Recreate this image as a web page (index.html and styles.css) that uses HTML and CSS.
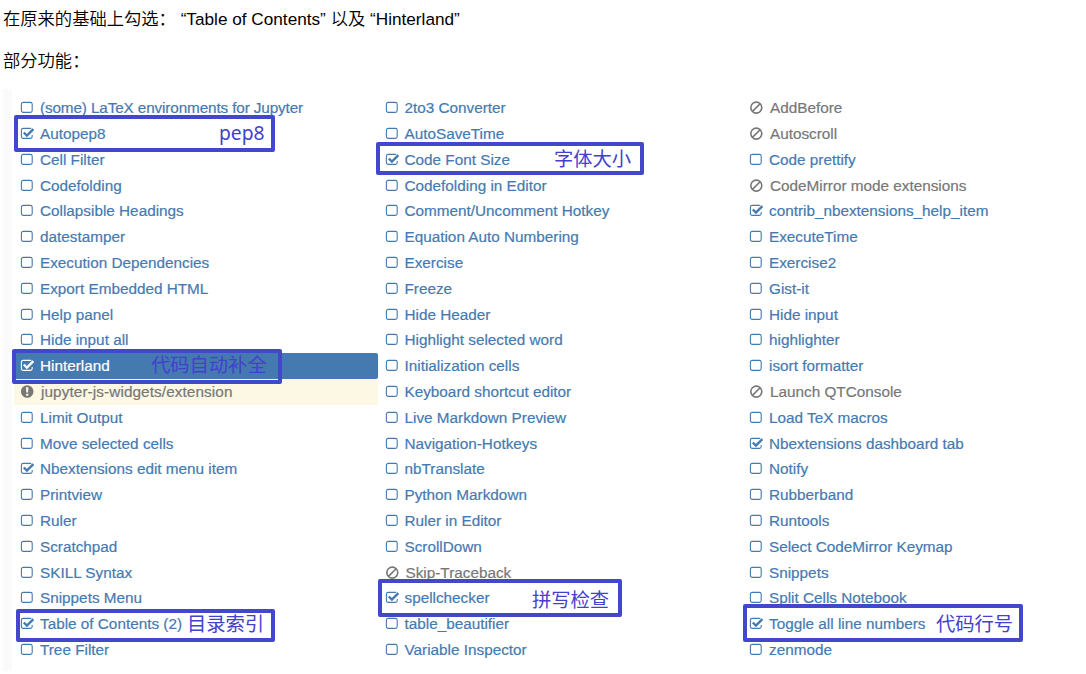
FILE: index.html
```html
<!DOCTYPE html>
<html lang="zh-CN">
<head>
<meta charset="utf-8">
<title>Nbextensions</title>
<link rel="stylesheet" href="styles.css">
</head>
<body>
<svg class="sprite" aria-hidden="true">
  <symbol id="off" viewBox="0 0 14 14"><rect x="1.4" y="1.4" width="10.8" height="10" rx="1.8" fill="none" stroke="currentColor" stroke-width="1.1"/></symbol>
  <symbol id="on" viewBox="0 0 14 14"><path d="M12.2 8v1.6a1.8 1.8 0 0 1-1.8 1.8H3.2a1.8 1.8 0 0 1-1.8-1.8V3.2a1.8 1.8 0 0 1 1.8-1.8h7.2q.5 0 .9.2" fill="none" stroke="currentColor" stroke-width="1.1"/><path d="M3.8 5.5l3.1 3.1 6.5-6.5" fill="none" stroke="currentColor" stroke-width="2.4"/></symbol>
  <symbol id="ban" viewBox="0 0 14 14"><circle cx="7.3" cy="6.6" r="5.5" fill="none" stroke="currentColor" stroke-width="1.6"/><path d="M3.5 10.4l7.6-7.6" stroke="currentColor" stroke-width="1.6"/></symbol>
  <symbol id="warn" viewBox="0 0 14 14"><circle cx="7.2" cy="6.5" r="6.3" fill="currentColor"/><path d="M6 2.3h2.4l-.3 5.3H6.3zM6.1 8.8h2.2v2H6.1z" fill="#fcf8e3"/></symbol>
</svg>
<p class="intro">在原来的基础上勾选： <span class="latin">“Table of Contents”</span> 以及 <span class="latin">“Hinterland”</span></p>
<p class="intro second">部分功能：</p>
<main class="panel">
  <div class="columns" id="columns"></div>
  <div class="mark mark-pep"><span>pep8</span></div>
  <div class="mark mark-hint"><span>代码自动补全</span></div>
  <div class="mark mark-toc"><span>目录索引</span></div>
  <div class="mark mark-font"><span>字体大小</span></div>
  <div class="mark mark-spell"><span>拼写检查</span></div>
  <div class="mark mark-lines"><span>代码行号</span></div>
</main>
<script src="app.js"></script>
</body>
</html>
```
FILE: styles.css
```css
* { box-sizing: border-box; }
body {
  margin: 0;
  width: 1086px;
  height: 674px;
  overflow: hidden;
  background: #fff;
  color: #000;
  font-family: "Liberation Sans", "Noto Sans CJK SC", sans-serif;
}
.sprite { display: none; }
.intro {
  margin: 0;
  padding: 7px 0 0 3px;
  height: 42px;
  font-size: 17.3px;
  line-height: 24px;
  font-weight: 350;
  white-space: nowrap;
}
.latin { font-size: 17.2px; }
.second { height: 47px; }
.panel {
  position: relative;
  height: 582px;
  margin-left: 3px;
  border-left: 9px solid #fafafa;
}
.columns {
  display: grid;
  grid-template-columns: 364.5px 364.5px 1fr;
  padding: 6.4px 0 0 2px;
}
.list { margin: 0; padding: 0; list-style: none; }
.item {
  display: flex;
  align-items: center;
  gap: 6px;
  height: 25.81px;
  margin-right: 1px;
  padding-left: 6px;
  color: #457ab1;
  font-size: 15.3px;
  white-space: nowrap;
  -webkit-text-stroke: 0.2px currentColor;
}
.item svg { width: 14px; height: 14px; flex: none; }
.item.ban, .item.warn { color: #777; }
.item.ban { gap: 7px; }
.item.warn { gap: 7px; background: #fcf8e3; letter-spacing: 0.1px; }
.item.selected { background: #457ab1; color: #fff; border-radius: 2px; }
.list:first-child .item:first-child { letter-spacing: -0.13px; }
.mark {
  position: absolute;
  border: 4px solid #4247cc;
  border-radius: 2px;
  color: #4340cf;
  font-size: 19.3px;
  line-height: 28px;
  white-space: nowrap;
}
.mark span { position: absolute; }
.mark-pep { left: 2px; top: 26px; width: 261px; height: 37px; }
.mark-pep span { left: 201px; top: 0; font-family: "Noto Sans", sans-serif; }
.mark-hint { left: 0; top: 260px; width: 270px; height: 35px; }
.mark-hint span { left: 135px; top: -1px; }
.mark-toc { left: 4px; top: 520px; width: 259px; height: 33px; }
.mark-toc span { left: 167px; top: -2px; }
.mark-font { left: 364px; top: 53px; width: 268px; height: 33px; }
.mark-font span { left: 174px; top: 0; }
.mark-spell { left: 366px; top: 490px; width: 244px; height: 38px; }
.mark-spell span { left: 150px; top: 4px; }
.mark-lines { left: 731px; top: 515px; width: 280px; height: 38px; }
.mark-lines span { left: 189px; top: 3px; }
```
FILE: app.js
```js
// Prefixes: "+" enabled, "-" incompatible, "!" deprecated, "*" currently selected.
const columns = [
  ["(some) LaTeX environments for Jupyter", "+Autopep8", "Cell Filter", "Codefolding", "Collapsible Headings", "datestamper", "Execution Dependencies", "Export Embedded HTML", "Help panel", "Hide input all", "*Hinterland", "!jupyter-js-widgets/extension", "Limit Output", "Move selected cells", "+Nbextensions edit menu item", "Printview", "Ruler", "Scratchpad", "SKILL Syntax", "Snippets Menu", "+Table of Contents (2)", "Tree Filter"],
  ["2to3 Converter", "AutoSaveTime", "+Code Font Size", "Codefolding in Editor", "Comment/Uncomment Hotkey", "Equation Auto Numbering", "Exercise", "Freeze", "Hide Header", "Highlight selected word", "Initialization cells", "Keyboard shortcut editor", "Live Markdown Preview", "Navigation-Hotkeys", "nbTranslate", "Python Markdown", "Ruler in Editor", "ScrollDown", "-Skip-Traceback", "+spellchecker", "table_beautifier", "Variable Inspector"],
  ["-AddBefore", "-Autoscroll", "Code prettify", "-CodeMirror mode extensions", "+contrib_nbextensions_help_item", "ExecuteTime", "Exercise2", "Gist-it", "Hide input", "highlighter", "isort formatter", "-Launch QTConsole", "Load TeX macros", "+Nbextensions dashboard tab", "Notify", "Rubberband", "Runtools", "Select CodeMirror Keymap", "Snippets", "Split Cells Notebook", "+Toggle all line numbers", "zenmode"]
];
const kinds = { "+": ["on", ""], "-": ["ban", "ban"], "!": ["warn", "warn"], "*": ["on", "selected"] };
document.getElementById("columns").innerHTML = columns.map(names =>
  '<ul class="list">' + names.map(name => {
    const kind = kinds[name[0]];
    const [icon, cls] = kind || ["off", ""];
    const label = kind ? name.slice(1) : name;
    return `<li class="item ${cls}"><svg><use href="#${icon}"/></svg><span>${label}</span></li>`;
  }).join("") + "</ul>").join("");
```
